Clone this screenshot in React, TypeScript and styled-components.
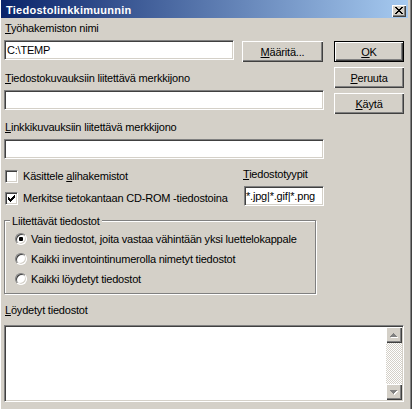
import React from "react";
import styled, { createGlobalStyle } from "styled-components";

const face = "#d4d0c8";

const GlobalStyle = createGlobalStyle`
  html, body {
    margin: 0;
    padding: 0;
    background: ${face};
  }
`;

const Window = styled.div`
  box-sizing: border-box;
  width: 412px;
  height: 409px;
  padding: 0 4px 0 1px;
  overflow: hidden;
  background: ${face};
  box-shadow: inset 1px 0 #fff, inset -1px 0 #404040, inset -2px 0 #808080;
  font-family: "Liberation Sans", Arial, sans-serif;
  font-size: 11px;
  letter-spacing: -0.2px;
  color: #000;
`;

const TitleBar = styled.div`
  box-sizing: border-box;
  display: flex;
  align-items: center;
  height: 18px;
  padding: 3px 2px 0 5px;
  background: linear-gradient(to right, #0a246a, #a6caf0);
  color: #fff;
  font-weight: bold;
  letter-spacing: 0.25px;
  line-height: 13px;
`;

const CloseButton = styled.div`
  box-sizing: border-box;
  display: flex;
  align-items: center;
  justify-content: center;
  width: 14px;
  height: 12px;
  margin-left: auto;
  background: ${face};
  box-shadow: inset 1px 1px #fff, inset -1px -1px #404040, inset -2px -2px #808080;
`;

const Body = styled.div`
  display: flex;
  flex-direction: column;
  padding: 4px 0 0 3px;
`;

const TopArea = styled.div`
  display: flex;
  gap: 10px;
`;

const LeftCol = styled.div`
  display: flex;
  flex-direction: column;
  width: 320px;
`;

const RightCol = styled.div`
  display: flex;
  flex-direction: column;
  gap: 5px;
  width: 70px;
  padding-top: 19px;
`;

const Label = styled.div<{ $top?: number; $left?: number }>`
  height: 13px;
  line-height: 13px;
  margin-top: ${(p) => p.$top ?? 0}px;
  padding-left: ${(p) => p.$left ?? 1}px;
  white-space: nowrap;
`;

const Key = styled.span`
  text-decoration: underline;
`;

const Field = styled.input<{
  $width: number;
  $top?: number;
  $left?: number;
  $pad?: number;
}>`
  box-sizing: border-box;
  width: ${(p) => p.$width}px;
  height: 20px;
  margin: ${(p) => p.$top ?? 0}px 0 0 ${(p) => p.$left ?? 0}px;
  padding: 0 0 0 ${(p) => p.$pad ?? 2}px;
  border: 1px solid;
  border-color: #808080 #fff #fff #808080;
  box-shadow: inset 1px 1px #404040, inset -1px -1px ${face};
  background: #fff;
  font: inherit;
  letter-spacing: inherit;
  color: #000;
  outline: none;
`;

const FieldRow = styled.div`
  display: flex;
  align-items: flex-start;
  gap: 8px;
  margin-top: 5px;
`;

const Button = styled.button<{ $width: number; $default?: boolean; $top?: number }>`
  box-sizing: border-box;
  width: ${(p) => p.$width}px;
  height: 21px;
  margin: ${(p) => p.$top ?? 0}px 0 0 0;
  padding: 0;
  border: ${(p) => (p.$default ? "1px solid #000" : "none")};
  background: ${face};
  box-shadow: inset 1px 1px #fff, inset -1px -1px #404040, inset -2px -2px #808080;
  font: inherit;
  letter-spacing: inherit;
  color: #000;
  text-align: center;
`;

const OptionsRow = styled.div`
  display: flex;
  margin-top: 6px;
`;

const CheckCol = styled.div`
  display: flex;
  flex-direction: column;
  width: 239px;
`;

const CheckRow = styled.div`
  display: flex;
  align-items: center;
  gap: 5px;
  height: 22px;
  padding-left: 1px;
  white-space: nowrap;
`;

const CheckBox = styled.div`
  box-sizing: border-box;
  display: flex;
  align-items: center;
  justify-content: center;
  flex: none;
  width: 13px;
  height: 13px;
  border: 1px solid;
  border-color: #808080 #fff #fff #808080;
  box-shadow: inset 1px 1px #404040, inset -1px -1px ${face};
  background: #fff;
`;

const TypesCol = styled.div`
  display: flex;
  flex-direction: column;
  width: 81px;
  padding-top: 3px;
`;

const GroupBox = styled.div`
  position: relative;
  box-sizing: border-box;
  display: flex;
  flex-direction: column;
  width: 312px;
  height: 74px;
  margin-top: 11px;
  padding: 8px 0 0 10px;
  border: 1px solid #808080;
  box-shadow: 1px 1px #fff, inset 1px 1px #fff;
`;

const GroupLabel = styled.span`
  position: absolute;
  top: -6px;
  left: 5px;
  padding: 0 2px;
  line-height: 13px;
  background: ${face};
`;

const RadioRow = styled.div`
  display: flex;
  align-items: center;
  gap: 4px;
  height: 20px;
  white-space: nowrap;
`;

const Radio = styled.div`
  box-sizing: border-box;
  display: flex;
  align-items: center;
  justify-content: center;
  flex: none;
  width: 12px;
  height: 12px;
  border-radius: 50%;
  border: 1px solid;
  border-color: #808080 #fff #fff #808080;
  box-shadow: inset 1px 1px #404040, inset -1px -1px ${face};
  background: #fff;
`;

const RadioDot = styled.div`
  width: 4px;
  height: 4px;
  border-radius: 1px;
  background: #000;
`;

const ListBox = styled.div`
  box-sizing: border-box;
  display: flex;
  justify-content: flex-end;
  width: 400px;
  height: 77px;
  margin-top: 8px;
  padding: 1px;
  border: 1px solid;
  border-color: #808080 #fff #fff #808080;
  box-shadow: inset 1px 1px #404040, inset -1px -1px ${face};
  background: #fff;
`;

const ScrollBar = styled.div`
  display: flex;
  flex-direction: column;
  width: 16px;
`;

const ScrollButton = styled.div`
  box-sizing: border-box;
  display: flex;
  align-items: center;
  justify-content: center;
  width: 16px;
  height: 16px;
  background: ${face};
  box-shadow: inset 1px 1px #fff, inset -1px -1px #404040, inset -2px -2px #808080;
`;

const ScrollTrack = styled.div`
  flex: 1;
  background-color: #fff;
  background-image: repeating-conic-gradient(${face} 0 25%, #fff 0 50%);
  background-size: 2px 2px;
`;

const CloseGlyph = () => (
  <svg width="8" height="7" viewBox="0 0 8 7" shapeRendering="crispEdges">
    <path
      fill="#000"
      d="M0 0h2v1H0zM6 0h2v1H6zM1 1h2v1H1zM5 1h2v1H5zM2 2h4v1H2zM3 3h2v1H3zM2 4h4v1H2zM1 5h2v1H1zM5 5h2v1H5zM0 6h2v1H0zM6 6h2v1H6z"
    />
  </svg>
);

const CheckGlyph = () => (
  <svg width="7" height="7" viewBox="0 0 7 7" shapeRendering="crispEdges">
    <path
      fill="#000"
      d="M6 0h1v1H6zM5 1h2v1H5zM0 2h1v1H0zM4 2h3v1H4zM0 3h2v1H0zM3 3h3v1H3zM0 4h5v1H0zM1 5h3v1H1zM2 6h1v1H2z"
    />
  </svg>
);

const arrowUp = "M3 0h1v1H3zM2 1h3v1H2zM1 2h5v1H1zM0 3h7v1H0z";
const arrowDown = "M0 0h7v1H0zM1 1h5v1H1zM2 2h3v1H2zM3 3h1v1H3z";

const Arrow = ({ down }: { down?: boolean }) => (
  <svg width="8" height="5" viewBox="0 0 8 5" shapeRendering="crispEdges">
    <path fill="#fff" transform="translate(1 1)" d={down ? arrowDown : arrowUp} />
    <path fill="#808080" d={down ? arrowDown : arrowUp} />
  </svg>
);

const radios = [
  "Vain tiedostot, joita vastaa vähintään yksi luettelokappale",
  "Kaikki inventointinumerolla nimetyt tiedostot",
  "Kaikki löydetyt tiedostot",
];

export default function App() {
  return (
    <>
      <GlobalStyle />
      <Window>
        <TitleBar>
          Tiedostolinkkimuunnin
          <CloseButton>
            <CloseGlyph />
          </CloseButton>
        </TitleBar>

        <Body>
          <TopArea>
            <LeftCol>
              <Label>
                <Key>T</Key>yöhakemiston nimi
              </Label>
              <FieldRow>
                <Field $width={230} defaultValue="C:\TEMP" readOnly />
                <Button $width={81} $top={1}>
                  <Key>M</Key>ääritä...
                </Button>
              </FieldRow>

              <Label $top={10}>
                <Key>T</Key>iedostokuvauksiin liitettävä merkkijono
              </Label>
              <Field $width={320} $top={5} readOnly />

              <Label $top={11}>
                <Key>L</Key>inkkikuvauksiin liitettävä merkkijono
              </Label>
              <Field $width={320} $top={5} readOnly />

              <OptionsRow>
                <CheckCol>
                  <CheckRow>
                    <CheckBox />
                    <span>
                      Käsittele <Key>a</Key>lihakemistot
                    </span>
                  </CheckRow>
                  <CheckRow>
                    <CheckBox>
                      <CheckGlyph />
                    </CheckBox>
                    <span>Merkitse tietokantaan CD-ROM -tiedostoina</span>
                  </CheckRow>
                </CheckCol>
                <TypesCol>
                  <Label $left={0}>
                    <Key>T</Key>iedostotyypit
                  </Label>
                  <Field
                    $width={80}
                    $top={5}
                    $left={1}
                    $pad={1}
                    defaultValue="*.jpg|*.gif|*.png"
                    readOnly
                  />
                </TypesCol>
              </OptionsRow>
            </LeftCol>

            <RightCol>
              <Button $width={70} $default>
                <Key>O</Key>K
              </Button>
              <Button $width={70}>
                <Key>P</Key>eruuta
              </Button>
              <Button $width={70}>
                <Key>K</Key>äytä
              </Button>
            </RightCol>
          </TopArea>

          <GroupBox>
            <GroupLabel>Liitettävät tiedostot</GroupLabel>
            {radios.map((text, i) => (
              <RadioRow key={text}>
                <Radio>{i === 0 && <RadioDot />}</Radio>
                <span>{text}</span>
              </RadioRow>
            ))}
          </GroupBox>

          <Label $top={10}>
            <Key>L</Key>öydetyt tiedostot
          </Label>
          <ListBox>
            <ScrollBar>
              <ScrollButton>
                <Arrow />
              </ScrollButton>
              <ScrollTrack />
              <ScrollButton>
                <Arrow down />
              </ScrollButton>
            </ScrollBar>
          </ListBox>
        </Body>
      </Window>
    </>
  );
}
